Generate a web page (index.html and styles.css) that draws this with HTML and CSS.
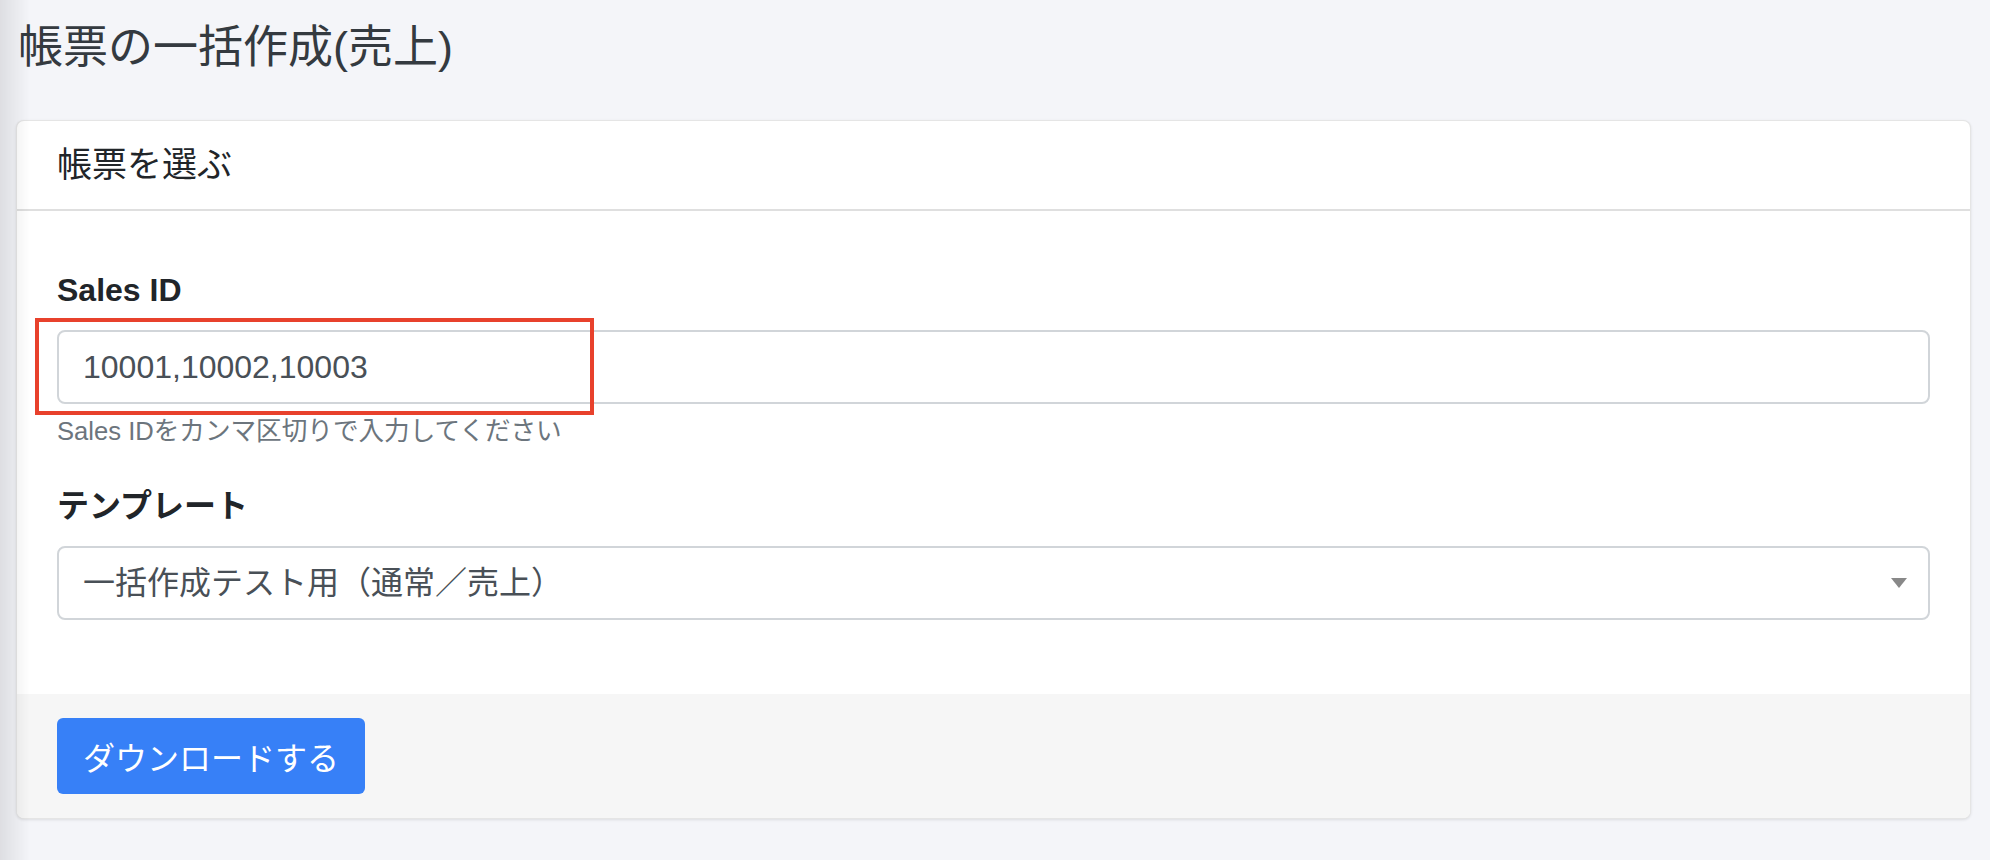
FILE: index.html
```html
<!DOCTYPE html>
<html lang="ja">
<head>
  <meta charset="UTF-8" />
  <meta name="viewport" content="width=device-width, initial-scale=1.0" />
  <title>帳票の一括作成(売上)</title>
  <link rel="stylesheet" href="styles.css">
</head>
<body>
  <div class="page">
    <h1 class="page-title">帳票の一括作成(売上)</h1>

    <div class="card">
      <div class="card-header">帳票を選ぶ</div>

      <div class="card-body">
        <div class="form-group">
          <label class="form-label" for="sales-id">Sales ID</label>
          <div class="field">
            <input class="form-control" id="sales-id" type="text" value="10001,10002,10003" />
            <span class="highlight"></span>
          </div>
          <small class="form-text">Sales IDをカンマ区切りで入力してください</small>
        </div>

        <div class="form-group">
          <label class="form-label" for="template">テンプレート</label>
          <div class="field">
            <select class="form-control" id="template">
              <option>一括作成テスト用（通常／売上）</option>
            </select>
            <svg class="caret" width="16" height="10" viewBox="0 0 16 10">
              <path d="M0 0 H16 L8 10 Z" fill="#888888" />
            </svg>
          </div>
        </div>
      </div>

      <div class="card-footer">
        <button class="btn btn-primary" type="button">ダウンロードする</button>
      </div>
    </div>
  </div>
</body>
</html>
```

FILE: styles.css
```css
body {
  font-family: "Liberation Sans", "Noto Sans CJK JP", sans-serif;
  background-color: #f4f5f9;
  color: #212529;
  margin: 0;
  font-size: 32px;
  line-height: 1.5;
}

/* soft shadow cast by the sidebar on the left */
body::before {
  content: "";
  position: fixed;
  top: 0;
  bottom: 0;
  left: 0;
  width: 30px;
  background: linear-gradient(to right, rgba(0, 0, 0, 0.09), rgba(0, 0, 0, 0));
  pointer-events: none;
  z-index: 10;
}

.page {
  padding: 0 19px 40px 16px;
}

.page-title {
  margin: 21px 0 45px 2px;
  font-size: 45px;
  font-weight: normal;
  line-height: 1.2;
  color: #343a40;
}

.card {
  background: #ffffff;
  border: 1px solid rgba(0, 0, 0, 0.1);
  border-radius: 8px;
  box-shadow: 0 1px 3px rgba(0, 0, 0, 0.1);
  overflow: hidden;
}

.card-header {
  display: flex;
  align-items: center;
  height: 88px;
  padding: 0 40px;
  font-size: 35px;
  color: #212529;
  border-bottom: 2px solid #dfdfdf;
}

.card-body {
  padding: 55px 40px 42px;
}

.form-group {
  margin-bottom: 32px;
}

.form-label {
  display: block;
  margin-bottom: 16px;
  font-weight: bold;
  line-height: 48px;
}

.field {
  position: relative;
}

.form-control {
  display: block;
  box-sizing: border-box;
  width: 100%;
  height: 74px;
  margin: 0;
  padding: 0 24px;
  font-family: inherit;
  font-size: 32px;
  color: #495057;
  background: #ffffff;
  border: 2px solid #d1d5d9;
  border-radius: 8px;
  outline: none;
  appearance: none;
  -webkit-appearance: none;
}

.caret {
  position: absolute;
  right: 23px;
  top: 32px;
}

.highlight {
  position: absolute;
  left: -22px;
  top: -12px;
  width: 559px;
  height: 97px;
  box-sizing: border-box;
  border: 4px solid #e8412c;
  pointer-events: none;
}

.form-text {
  display: block;
  margin-top: 8px;
  font-size: 25.6px;
  line-height: 38px;
  color: #6c757d;
}

.card-footer {
  padding: 24px 40px;
  background: #f6f6f6;
}

.btn {
  height: 76px;
  padding: 0 26px;
  font-family: inherit;
  font-size: 32px;
  border: 0;
  border-radius: 6px;
  cursor: pointer;
}

.btn-primary {
  background: #3780f7;
  color: #ffffff;
}
```
